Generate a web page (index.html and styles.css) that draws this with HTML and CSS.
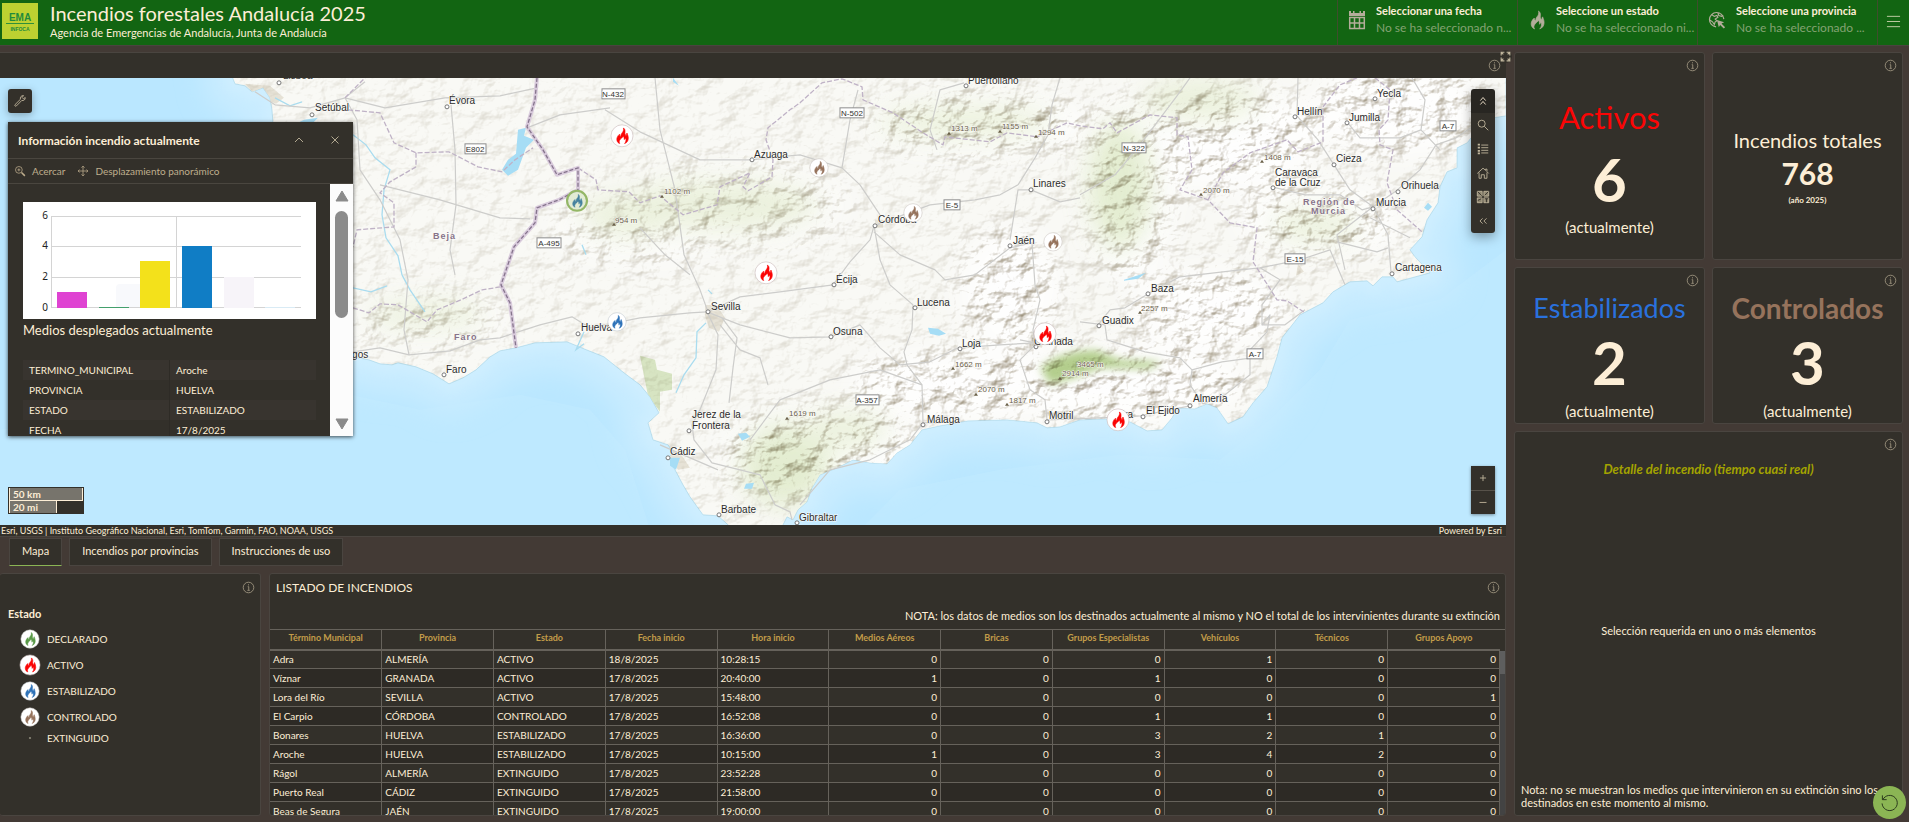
FILE: index.html
```html
<!DOCTYPE html>
<html lang="es">

<head>
    <meta charset="UTF-8">
    <meta name="viewport" content="width=device-width, initial-scale=1.0">
    <title>Incendios forestales Andalucía 2025</title>
    <link rel="stylesheet" href="styles.css">
</head>

<body>

    <!-- Shared icons -->
    <svg class="sprite" aria-hidden="true">
        <symbol id="info" viewBox="0 0 16 16">
            <circle cx="8" cy="8" r="6.5" fill="none" stroke="currentColor" />
            <path d="M8 4v1.4M7 7h1.3v4.4M6.6 11.5h3" fill="none" stroke="currentColor" />
        </symbol>
        <symbol id="flame" viewBox="0 0 16 16">
            <path d="M9.400 0c.5 2.400-.2 3.700-1.500 5.300C7 6.400 6.700 7.600 7.100 8.700 6 8.300 5.500 7.400 5.600 6.300 3.500 8 2.500 10.300 2.900 12.400 3.200 14 4.300 15.300 5.800 16c-.9-1.700-.7-3.100.5-4.500.9-1.100 2.200-1.700 2.900-3.100.9 1 1.200 2 .9 3.300.8-.3 1.200-1 1.300-1.900 1.100 2.200.6 4.500-1 6.200 2.400-1 3.800-2.900 3.900-5.400.1-2-.7-3.700-1.300-5.400-.7 1-.7 1.700-.5 2.800C11 7 10.700 5.700 11 4.300 11.300 2.400 10.700 1 9.400 0z" stroke-width=".6" />
        </symbol>
        <symbol id="fire-red" viewBox="0 0 24 24">
            <circle cx="12" cy="12" r="11" fill="#fff" stroke="#c9b9b9" stroke-width=".6" />
            <use href="#flame" x="4" y="4" width="16" height="16" fill="#fb0505" stroke="#fb0505" />
        </symbol>
        <symbol id="fire-blue" viewBox="0 0 24 24">
            <circle cx="12" cy="12" r="11" fill="#fff" stroke="#b9c0c9" stroke-width=".6" />
            <use href="#flame" x="4" y="4" width="16" height="16" fill="#2f73b9" stroke="#2f73b9" />
        </symbol>
        <symbol id="fire-brown" viewBox="0 0 24 24">
            <circle cx="12" cy="12" r="11" fill="#fff" stroke="#c4bfba" stroke-width=".6" />
            <use href="#flame" x="4" y="4" width="16" height="16" fill="#96735c" stroke="#96735c" />
        </symbol>
        <symbol id="fire-green" viewBox="0 0 24 24">
            <circle cx="12" cy="12" r="11" fill="#fff" stroke="#bcc4ba" stroke-width=".6" />
            <use href="#flame" x="4" y="4" width="16" height="16" fill="#5a9a48" stroke="#5a9a48" />
        </symbol>
    </svg>

    <header class="header">
        <svg class="logo" viewBox="0 0 36 36" role="img" aria-label="EMA INFOCA">
            <rect width="36" height="36" fill="#bdd131" />
            <text class="logo-ema" x="18" y="18">EMA</text>
            <path d="M4 20.500h28" stroke="#2f8f3a" stroke-width="1" />
            <text class="logo-infoca" x="18" y="28">INFOCA</text>
        </svg>
        <div class="titles">
            <h1>Incendios forestales Andalucía 2025</h1>
            <p>Agencia de Emergencias de Andalucía, Junta de Andalucía</p>
        </div>
        <button class="selector" type="button">
            <svg class="selector-icon" viewBox="0 0 18 20">
                <path d="M1 1h2v2h2V1h1.500v2h5V1H13v2h2V1h2v5H1z" fill="currentColor" />
                <path d="M1.700 7.500h14.600v11H1.700zM1.700 13h14.600M6.500 7.500v11M11.500 7.500v11" fill="none" stroke="currentColor" stroke-width="1.500" />
            </svg>
            <span class="selector-text"><strong>Seleccionar una fecha</strong><span>No se ha seleccionado n...</span></span>
        </button>
        <button class="selector" type="button">
            <svg class="selector-icon" fill="currentColor" stroke="currentColor"><use href="#flame" /></svg>
            <span class="selector-text"><strong>Seleccione un estado</strong><span>No se ha seleccionado ni...</span></span>
        </button>
        <button class="selector" type="button">
            <svg class="selector-icon" viewBox="0 0 20 20">
                <path d="M17.600 9A8 8 0 1 0 9 17.600M4 4l3 2 3-1 1 2-3 2 2 2-2 1-1 3-2-3-3-2M11 2l1 3 3 1 2-1" fill="none" stroke="currentColor" stroke-width="1.300" />
                <path d="M10 10l8 2.500-3 1.500 4 4-1.500 1.500-4-4-1.500 2.500z" fill="currentColor" />
            </svg>
            <span class="selector-text"><strong>Seleccione una provincia</strong><span>No se ha seleccionado ...</span></span>
        </button>
        <button class="menu" type="button" aria-label="Menú">
            <svg viewBox="0 0 16 16"><path d="M1 2.500h14M1 8h14M1 13.500h14" stroke="currentColor" /></svg>
        </button>
    </header>

    <main class="dashboard">
        <div class="left">
            <div class="upper">
                <section class="panel map-panel">
                    <div class="map-bar">
                        <button class="info" type="button" aria-label="Información"><svg><use href="#info" /></svg></button>
                    </div>
                    <button class="expand" type="button" aria-label="Expandir">
                        <svg viewBox="0 0 12 12"><path d="M2 5V2h3M7 2h3v3M10 7v3H7M5 10H2V7M2 2l2 2M10 2L8 4M10 10L8 8M2 10l2-2" fill="none" stroke="currentColor" /></svg>
                    </button>
                    <div class="map">
                        <svg class="map-canvas" viewBox="0 78 1506 447" preserveAspectRatio="xMidYMid slice">
                            <defs>
                                <path id="land" d="M233 79L235 84 245 86 252 92 263 88 270 98 272 110 273 124 276 150 290 180 300 250 310 330 353 357 369 360 380 364 392 365 398 363 416 367 433 374 449 384 463 378 476 370 490 357 500 351 516 348 535 343 567 342 584 349 604 357 624 373 640 385 650 397 659 413 648 423 653 440 668 445 673 453 669 458 675 470 683 485 690 497 703 515 718 516 728 525V530H783V525L787 517 793 520 798 510 807 502 812 488 820 475 837 468 853 460 870 463 887 464 897 453 910 445 922 430 940 426 968 421 1007 420 1037 423 1047 428 1060 427 1080 420 1107 419 1130 422 1147 431 1162 430 1172 418 1177 408 1195 409 1207 404 1217 408 1228 424 1243 417 1253 403 1267 387 1277 357 1282 338 1300 315 1323 303 1333 292 1350 282 1367 281 1373 286 1382 277 1393 277 1397 282 1430 273 1415 257 1410 250 1422 237 1427 220 1438 203 1440 187 1447 172 1457 168 1457 148 1467 143 1480 127 1493 118 1506 116V70H233z" />
                                <clipPath id="land-clip"><use href="#land" /></clipPath>
                                <filter id="soft" x="-30%" y="-30%" width="160%" height="160%"><feGaussianBlur stdDeviation="13" /></filter>
                                <filter id="edge" x="-30%" y="-30%" width="160%" height="160%"><feGaussianBlur stdDeviation="4" /></filter>
                                <filter id="relief" x="0" y="0" width="100%" height="100%" color-interpolation-filters="sRGB">
                                    <feTurbulence type="fractalNoise" baseFrequency=".045 .06" numOctaves="5" seed="11" />
                                    <feDiffuseLighting surfaceScale="6" diffuseConstant="1.25" lighting-color="#fff">
                                        <feDistantLight azimuth="225" elevation="54" />
                                    </feDiffuseLighting>
                                    <feComponentTransfer>
                                        <feFuncR type="linear" slope=".5" intercept=".5" />
                                        <feFuncG type="linear" slope=".55" intercept=".45" />
                                        <feFuncB type="linear" slope=".65" intercept=".35" />
                                    </feComponentTransfer>
                                </filter>
                                <mask id="hills">
                                    <rect y="70" width="1506" height="460" fill="#3c3c3c" />
                                    <g filter="url(#soft)" fill="#ddd">
                                        <ellipse cx="640" cy="230" rx="90" ry="35" fill="#999" />
                                        <ellipse cx="740" cy="205" rx="110" ry="40" fill="#999" />
                                        <ellipse cx="980" cy="125" rx="110" ry="28" />
                                        <ellipse cx="1130" cy="190" rx="45" ry="90" />
                                        <ellipse cx="1230" cy="140" rx="90" ry="50" />
                                        <ellipse cx="820" cy="455" rx="100" ry="45" />
                                        <ellipse cx="960" cy="385" rx="110" ry="35" />
                                        <ellipse cx="1010" cy="290" rx="50" ry="60" />
                                        <ellipse cx="1120" cy="385" rx="130" ry="38" />
                                        <ellipse cx="1210" cy="310" rx="80" ry="40" />
                                        <ellipse cx="1320" cy="220" rx="80" ry="35" />
                                        <ellipse cx="1400" cy="110" rx="90" ry="45" />
                                        <ellipse cx="430" cy="320" rx="80" ry="22" fill="#999" />
                                    </g>
                                </mask>
                            </defs>

                            <!-- Sea -->
                            <rect y="70" width="1506" height="460" fill="#bae7ff" />
                            <path d="M0 530V430L90 420 160 440 250 420 290 390 350 395 420 410 520 395 590 410 625 450 650 530zM860 530L900 490 1000 470 1120 455 1220 460 1270 420 1320 370 1350 320 1440 300 1506 250V530z" fill="#c0e9ff" opacity=".7" />
                            <use href="#land" fill="none" stroke="#c9ecff" stroke-width="60" stroke-linejoin="round" filter="url(#soft)" />
                            <use href="#land" fill="none" stroke="#ceeeff" stroke-width="16" stroke-linejoin="round" filter="url(#edge)" />

                            <!-- Land, woods and relief -->
                            <use href="#land" fill="#f7f7f2" stroke="#b4dcec" />
                            <g clip-path="url(#land-clip)">
                                <g filter="url(#soft)" fill="#e4ecd0" opacity=".7">
                                    <ellipse cx="720" cy="205" rx="100" ry="26" />
                                    <ellipse cx="630" cy="215" rx="50" ry="22" />
                                    <ellipse cx="965" cy="122" rx="90" ry="18" />
                                    <ellipse cx="1120" cy="185" rx="32" ry="65" fill="#d8e5bd" />
                                    <ellipse cx="1200" cy="100" rx="60" ry="22" />
                                    <ellipse cx="785" cy="465" rx="45" ry="42" fill="#d8e5bd" />
                                    <ellipse cx="845" cy="430" rx="45" ry="20" />
                                    <ellipse cx="1315" cy="225" rx="45" ry="18" />
                                    <ellipse cx="425" cy="315" rx="60" ry="14" />
                                </g>
                                <path d="M640 356L655 360 657 370 672 374 672 390 660 392 660 412 648 396z" fill="#d7e4c2" />
                                <path d="M1040 368L1055 358 1075 352 1095 350 1120 360 1162 362 1150 369 1100 368 1075 378 1050 385z" fill="#b3cd8c" filter="url(#edge)" />
                                <path class="urban" d="M245 84l25 2 14 12-8 6-20-8zM705 305l12 1 8 12-6 14-10-4-4-12zM1032 338l12 2-2 8-10-2zM668 448l14 8 8 12-12 2-8-12zM1298 264l6 8-8 4zM875 220l8 0 0 8-8 0z" />
                                <g mask="url(#hills)" class="shade">
                                    <rect y="70" width="1506" height="460" filter="url(#relief)" />
                                </g>
                            </g>

                            <!-- Rivers and lakes -->
                            <g class="river">
                                <path d="M706 323L697 332 696 358 684 375 676 393M353 135L366 145 375 158 390 170 384 190 382 215 386 238 398 256 402 275M402 275L410 290 425 312M353 288l18 4 16-6M708 290l4 4M584 332l-8 18 8 -6M586 255l-4-10M275 98l15 8 12-4" />
                            </g>
                            <path class="lake" d="M518 130l8-2-2 8 10 4-8 8-8 22-10 6-6-6 6-10 8-6zM928 328l10 1 8 5-7 2-9-2zM738 434l8-1 4 4-8 4zM746 484l8-1-2 6-8 0zM673 78l6 8-6-4zM1124 280l22-7-8 6-14 2zM1428 203l4 4-4 4-4-3zM292 126l12-6 14-2-6 6-18 4zM670 458l10 0-4 12-6-4z" />

                            <!-- Roads -->
                            <g class="road">
                                <path d="M255 92L275 105 310 108 345 98 365 82M345 98L357 120 360 170 380 200 400 240 408 280 404 330 409 355M345 98L385 108 445 98 500 96 537 88M409 355L380 348 353 352M409 355L450 351 480 340 500 338 540 325 572 317 590 328 640 318 690 313 707 312" />
                                <path d="M380 185L440 200 500 218 530 219M451 105L455 150 456 205 450 250 455 275M527 128L560 115 610 108M605 110L640 132 700 160 752 160M655 78L660 130 675 190 684 255 700 290 708 312M640 228L665 255 690 275" />
                                <path d="M707 312L740 297 780 292 833 285 850 262 870 240 874 226 890 220 930 205 975 200 1000 195 1018 185 1035 158 1048 135 1052 105 1060 78" />
                                <path d="M707 312L740 325 790 338 831 337 860 325 880 348 900 365 930 362 958 348 1000 345 1035 343 1020 340M874 226L880 260 890 285 913 305 912 330 904 352 907 365 922 385 923 423M707 312L718 335 716 370 700 410 692 425 694 440 712 463 760 475 775 505 790 512 792 520M720 325L740 350 760 358 768 385M722 318l15 20-4 30-4 35" />
                                <path d="M874 232L900 255 935 270 945 280 975 275 1010 248 1032 243 1035 285 1040 300 1033 330 1035 345M880 215L860 185 842 168 850 120 858 90M842 168L800 155 768 158 752 160M964 83L940 90 930 130 937 150M1031 190L1018 190 1010 240M1031 190L1060 202 1080 198M1080 195L1115 175 1140 145 1177 96 1190 78M1080 322L1105 325 1107 340 1145 352 1180 358 1192 370 1190 385 1203 404 1225 395 1250 375 1250 350 1267 332 1270 315 1262 325M1098 325L1110 310 1125 308 1150 293 1180 277 1240 270 1260 268 1300 260 1330 250 1345 285M1260 268L1280 280 1262 305 1262 325 1285 325 1305 310M1192 370l30-8 30-4" />
                                <path d="M1298 78L1297 116 1318 140 1334 165 1350 190 1373 207 1388 235 1390 260 1391 272M1272 187L1305 195 1340 195 1362 210 1373 207 1395 192 1420 170 1436 145 1456 138 1471 128M1373 207L1337 235 1345 270M1370 218l40 20M1337 242l40 10 11-4M1412 78L1425 100 1421 130 1440 150M1347 122L1360 138 1400 138 1421 130M923 423L960 422M718 470L660 445M923 423L910 440 870 460 830 470 800 505M1035 345L1020 360 1030 390 1045 400 1047 420 1100 418 1140 416 1190 406M750 440L780 400 830 380 880 370 922 385" />
                            </g>

                            <!-- Limits between provinces and countries -->
                            <g class="limit">
                                <path d="M348 110L380 113 394 143 416 153 449 152 478 167 502 172 515 160 533 148M416 153L416 167 390 182 380 193 394 203 394 227 357 230 353 247M353 308L369 313 380 304 398 305 427 322 437 310 461 300 482 290 501 287M345 98l20-20" />
                                <path d="M578 168L596 180 598 190 629 192 640 203 660 196 683 215 717 205 720 187 750 173 743 187 748 191 772 177 773 160 766 140 768 128 790 110 800 103 822 83 842 79 862 87 863 100 893 113 923 133 943 145 945 137 990 142 1007 133 1037 137 1067 123 1080 126 1103 129 1110 123 1117 133 1150 115 1177 118 1177 135 1188 137 1192 170 1180 190 1208 200 1230 223 1257 228 1253 262 1277 300 1287 301 1305 313M1208 200L1223 173 1250 153 1287 140 1298 152 1323 142 1323 107 1340 85 1357 78M1375 78L1390 90 1388 120 1379 130 1380 145 1393 150 1387 183 1397 210 1422 232" />
                            </g>
                            <path class="frontier-halo" d="M537 78L535 100 527 127 543 150 557 175 578 168 578 190 559 200 537 208 535 223 514 247 501 285 510 303 516 348" />
                            <path class="frontier" d="M537 78L535 100 527 127 543 150 557 175 578 168 578 190 559 200 537 208 535 223 514 247 501 285 510 303 516 348" />

                            <!-- Towns -->
                            <g class="town">
                                <circle cx="279" cy="83" r="2" /><circle cx="312" cy="115" r="2" /><circle cx="447" cy="107" r="2" />
                                <circle cx="444" cy="375" r="2" /><circle cx="578" cy="334" r="2" /><circle cx="752" cy="160" r="2" />
                                <circle cx="966" cy="86" r="2" /><circle cx="1031" cy="190" r="2" /><circle cx="875" cy="226" r="2" />
                                <circle cx="1010" cy="246" r="2" /><circle cx="708" cy="312" r="2" /><circle cx="834" cy="285" r="2" />
                                <circle cx="915" cy="308" r="2" /><circle cx="831" cy="337" r="2" /><circle cx="960" cy="349" r="2" />
                                <circle cx="1036" cy="347" r="2" /><circle cx="923" cy="425" r="2" /><circle cx="1047" cy="422" r="2" />
                                <circle cx="689" cy="431" r="2" /><circle cx="668" cy="458" r="2" /><circle cx="719" cy="515" r="2" />
                                <circle cx="797" cy="523" r="2" /><circle cx="1375" cy="99" r="2" /><circle cx="1295" cy="117" r="2" />
                                <circle cx="1347" cy="123" r="2" /><circle cx="1334" cy="165" r="2" /><circle cx="1273" cy="188" r="2" />
                                <circle cx="1398" cy="192" r="2" /><circle cx="1373" cy="209" r="2" /><circle cx="1392" cy="274" r="2" />
                                <circle cx="1148" cy="294" r="2" /><circle cx="1099" cy="326" r="2" /><circle cx="1190" cy="406" r="2" />
                                <circle cx="1143" cy="417" r="2" />
                            </g>
                            <g class="place">
                                <text x="283" y="79">Lisboa</text><text x="315" y="111">Setúbal</text><text x="449" y="104">Évora</text>
                                <text x="341" y="358">Lagos</text><text x="446" y="373">Faro</text><text x="581" y="331">Huelva</text>
                                <text x="754" y="158">Azuaga</text><text x="968" y="84">Puertollano</text><text x="1033" y="187">Linares</text>
                                <text x="878" y="223">Córdoba</text><text x="1013" y="244">Jaén</text><text x="711" y="310">Sevilla</text>
                                <text x="836" y="283">Écija</text><text x="917" y="306">Lucena</text><text x="833" y="335">Osuna</text>
                                <text x="962" y="347">Loja</text><text x="1034" y="345">Granada</text><text x="927" y="423">Málaga</text>
                                <text x="1049" y="419">Motril</text><text x="692" y="418">Jerez de la</text><text x="692" y="429">Frontera</text>
                                <text x="670" y="455">Cádiz</text><text x="721" y="513">Barbate</text><text x="799" y="521">Gibraltar</text>
                                <text x="1377" y="97">Yecla</text><text x="1297" y="115">Hellín</text><text x="1349" y="121">Jumilla</text>
                                <text x="1336" y="162">Cieza</text><text x="1275" y="176">Caravaca</text><text x="1275" y="186">de la Cruz</text>
                                <text x="1401" y="189">Orihuela</text><text x="1376" y="206">Murcia</text><text x="1395" y="271">Cartagena</text>
                                <text x="1151" y="292">Baza</text><text x="1102" y="324">Guadix</text><text x="1193" y="402">Almería</text>
                                <text x="1146" y="414">El Ejido</text><text x="1112" y="418">Adra</text>
                            </g>
                            <g class="region">
                                <text x="310" y="150">Setúbal</text><text x="433" y="239">Beja</text><text x="454" y="340">Faro</text>
                                <text x="1303" y="205">Región de</text><text x="1311" y="214">Murcia</text>
                            </g>
                            <g class="peak">
                                <text x="615" y="223">954 m</text><text x="664" y="194">1102 m</text><text x="951" y="131">1313 m</text>
                                <text x="1002" y="129">1155 m</text><text x="1038" y="135">1294 m</text><text x="1264" y="160">1408 m</text>
                                <text x="1203" y="193">2070 m</text><text x="1141" y="311">2257 m</text><text x="1077" y="367">3465 m</text>
                                <text x="1062" y="376">2914 m</text><text x="955" y="367">1662 m</text><text x="978" y="392">2070 m</text>
                                <text x="1009" y="403">1817 m</text><text x="789" y="416">1619 m</text>
                                <path d="M612 226l2-3 2 3zM660 198l2-3 2 3zM947 135l2-3 2 3zM998 133l2-3 2 3zM1034 138l2-3 2 3zM1260 163l2-3 2 3zM1199 196l2-3 2 3zM1138 314l2-3 2 3zM1058 380l2-3 2 3zM951 370l2-3 2 3zM974 396l2-3 2 3zM1005 406l2-3 2 3zM785 420l2-3 2 3z" />
                            </g>
                            <g class="shield">
                                <rect x="602" y="89" width="23" height="10" /><text x="613" y="97">N-432</text>
                                <rect x="465" y="144" width="21" height="10" /><text x="475" y="152">E802</text>
                                <rect x="537" y="238" width="24" height="10" /><text x="549" y="246">A-495</text>
                                <rect x="840" y="108" width="24" height="10" /><text x="852" y="116">N-502</text>
                                <rect x="944" y="200" width="16" height="10" /><text x="952" y="208">E-5</text>
                                <rect x="856" y="395" width="23" height="10" /><text x="867" y="403">A-357</text>
                                <rect x="1122" y="143" width="24" height="10" /><text x="1134" y="151">N-322</text>
                                <rect x="1285" y="254" width="20" height="10" /><text x="1295" y="262">E-15</text>
                                <rect x="1247" y="349" width="16" height="10" /><text x="1255" y="357">A-7</text>
                                <rect x="1440" y="121" width="16" height="10" /><text x="1448" y="129">A-7</text>
                            </g>

                            <!-- Fires -->
                            <use href="#fire-red" x="610" y="124" width="24" height="24" />
                            <use href="#fire-blue" x="567" y="191" width="20" height="20" />
                            <circle cx="577" cy="201" r="10" fill="#8bb554" fill-opacity=".25" stroke="#94b766" stroke-width="2" />
                            <use href="#fire-blue" x="607" y="312" width="20" height="20" />
                            <use href="#fire-brown" x="809" y="158" width="20" height="20" />
                            <use href="#fire-brown" x="903" y="203" width="20" height="20" />
                            <use href="#fire-brown" x="1043" y="232" width="20" height="20" />
                            <use href="#fire-red" x="754" y="261" width="24" height="24" />
                            <use href="#fire-red" x="1033" y="322" width="24" height="24" />
                            <use href="#fire-red" x="1106" y="408" width="24" height="24" />
                        </svg>

                        <button class="tool wrench" type="button" aria-label="Herramientas">
                            <svg viewBox="0 0 16 16"><path d="M2.300 12.200l6.200-6.200c-.6-2.200.8-4.300 3.500-4.200l-1.600 2.200 1.500 1.500L14 4c.2 2.500-1.800 4-4 3.400l-6.200 6.300c-1 .9-2.400-.5-1.500-1.500z" fill="none" stroke="currentColor" /></svg>
                        </button>

                        <article class="popup">
                            <header class="popup-header">
                                <h2>Información incendio actualmente</h2>
                                <button type="button" aria-label="Contraer"><svg viewBox="0 0 16 16"><path d="M4 10l4-4 4 4" fill="none" stroke="currentColor" /></svg></button>
                                <button type="button" aria-label="Cerrar"><svg viewBox="0 0 16 16"><path d="M4.500 4.500l7 7M11.500 4.500l-7 7" stroke="currentColor" /></svg></button>
                            </header>
                            <div class="popup-actions">
                                <button type="button"><svg viewBox="0 0 16 16"><circle cx="6.500" cy="6.500" r="4.500" fill="none" stroke="currentColor" /><path d="M4.500 6.500h4M6.500 4.500v4" stroke="currentColor" /><path d="M10 10l4.500 4.500" stroke="currentColor" stroke-width="2" /></svg>Acercar</button>
                                <button type="button"><svg viewBox="0 0 16 16"><path d="M8 1.500v13M1.500 8h13M6 3.500l2-2 2 2M6 12.500l2 2 2-2M3.500 6l-2 2 2 2M12.500 6l2 2-2 2" fill="none" stroke="currentColor" /></svg>Desplazamiento panorámico</button>
                            </div>
                            <div class="popup-body">
                                <div class="popup-content">
                                    <svg class="chart" viewBox="0 0 293 117" role="img" aria-label="Medios desplegados">
                                        <path d="M28.500 14v91M153.500 14v91M28 14.500h250M28 44.500h250M28 75.500h250M28 105.500h250" stroke="#d4d4d4" />
                                        <path d="M93 105V86q0-4 4-4h45v23z" fill="#f8f9fc" />
                                        <rect x="34" y="90" width="30" height="16" fill="#df43d2" />
                                        <rect x="76" y="105" width="30" height="1" fill="#43a06c" />
                                        <rect x="117" y="59" width="30" height="47" fill="#f3e11b" />
                                        <rect x="159" y="44" width="30" height="62" fill="#107dc5" />
                                        <rect x="201" y="75" width="30" height="31" fill="#f7f4f9" />
                                        <rect x="242" y="105" width="30" height="1" fill="#d9ebf5" />
                                        <text x="25" y="17">6</text><text x="25" y="47">4</text><text x="25" y="78">2</text><text x="25" y="109">0</text>
                                    </svg>
                                    <p class="chart-caption">Medios desplegados actualmente</p>
                                    <table class="attributes">
                                        <tr><th scope="row">TERMINO_MUNICIPAL</th><td>Aroche</td></tr>
                                        <tr><th scope="row">PROVINCIA</th><td>HUELVA</td></tr>
                                        <tr><th scope="row">ESTADO</th><td>ESTABILIZADO</td></tr>
                                        <tr><th scope="row">FECHA</th><td>17/8/2025</td></tr>
                                    </table>
                                </div>
                                <div class="scrollbar">
                                    <svg viewBox="0 0 14 12"><path d="M7 1l6 10H1z" fill="currentColor" stroke="currentColor" stroke-linejoin="round" /></svg>
                                    <span class="thumb"></span>
                                    <svg viewBox="0 0 14 12"><path d="M7 11L1 1h12z" fill="currentColor" stroke="currentColor" stroke-linejoin="round" /></svg>
                                </div>
                            </div>
                        </article>

                        <div class="toolbar">
                            <button class="tool active" type="button" aria-label="Contraer"><svg viewBox="0 0 16 16"><path d="M5 7.500l3-3.500 3 3.500M5 12l3-3.500 3 3.500" fill="none" stroke="currentColor" /></svg></button>
                            <button class="tool" type="button" aria-label="Buscar"><svg viewBox="0 0 16 16"><circle cx="6.500" cy="6.500" r="4" fill="none" stroke="currentColor" /><path d="M9.500 9.500l4.500 4.500" stroke="currentColor" /></svg></button>
                            <button class="tool" type="button" aria-label="Leyenda"><svg viewBox="0 0 16 16"><path d="M6 3.500h8M6 6.500h8M6 9.500h8M6 12.500h8" stroke="currentColor" /><path d="M2 3h2.500M2 6.500h2.500M2 10h2.500M2 13h2.500" stroke="currentColor" stroke-width="2" /></svg></button>
                            <button class="tool" type="button" aria-label="Inicio"><svg viewBox="0 0 16 16"><path d="M1.500 8.500L8 2.500l3 2.500V3.500h1.500v3l2 2M3.500 7.500v6.500H6v-4h3.500v4h3V7.500" fill="none" stroke="currentColor" /></svg></button>
                            <button class="tool" type="button" aria-label="Mapa base"><svg viewBox="0 0 16 16"><path d="M1.500 1.500h5.500v5.500H1.500zM9 1.500h5.500v5.500H9zM1.500 9h5.500v5.500H1.500zM9 9h5.500v5.500H9z" fill="#8e8671" stroke="currentColor" /><path d="M2 2l4.500 4.500M10 6l4-4M2 12l4-2M10 10h4M12 10v4" stroke="#33302a" /></svg></button>
                            <button class="tool" type="button" aria-label="Plegar"><svg viewBox="0 0 16 16"><path d="M7.500 5l-3 3 3 3M12 5L9 8l3 3" fill="none" stroke="currentColor" /></svg></button>
                        </div>

                        <div class="zoom">
                            <button class="tool" type="button" aria-label="Acercar"><svg viewBox="0 0 16 16"><path d="M8 4.500v7M4.500 8h7" stroke="currentColor" /></svg></button>
                            <button class="tool" type="button" aria-label="Alejar"><svg viewBox="0 0 16 16"><path d="M4 8.500h8" stroke="currentColor" /></svg></button>
                        </div>

                        <div class="scale">
                            <span class="km">50 km</span>
                            <span class="mi">20 mi</span>
                        </div>
                    </div>
                    <footer class="attribution">
                        <span>Esri, USGS | Instituto Geográfico Nacional, Esri, TomTom, Garmin, FAO, NOAA, USGS</span>
                        <span>Powered by <a href="#">Esri</a></span>
                    </footer>
                </section>
                <nav class="tabs">
                    <button class="tab selected" type="button">Mapa</button>
                    <button class="tab" type="button">Incendios por provincias</button>
                    <button class="tab" type="button">Instrucciones de uso</button>
                </nav>
            </div>

            <div class="lower">
                <section class="panel legend">
                    <button class="info" type="button" aria-label="Información"><svg><use href="#info" /></svg></button>
                    <h2>Estado</h2>
                    <ul>
                        <li><svg><use href="#fire-green" /></svg>DECLARADO</li>
                        <li class="big"><svg><use href="#fire-red" /></svg>ACTIVO</li>
                        <li><svg><use href="#fire-blue" /></svg>ESTABILIZADO</li>
                        <li><svg><use href="#fire-brown" /></svg>CONTROLADO</li>
                        <li class="dot"><svg viewBox="0 0 18 18"><circle cx="9" cy="9" r="1" fill="#8b8779" /></svg>EXTINGUIDO</li>
                    </ul>
                </section>

                <section class="panel listing">
                    <button class="info" type="button" aria-label="Información"><svg><use href="#info" /></svg></button>
                    <h2>LISTADO DE INCENDIOS</h2>
                    <p>NOTA: los datos de medios son los destinados actualmente al mismo y NO el total de los intervinientes durante su extinción</p>
                    <div class="table-wrap">
                        <table class="fires">
                            <thead>
                                <tr><th>Término Municipal</th><th>Provincia</th><th>Estado</th><th>Fecha inicio</th><th>Hora inicio</th><th>Medios Aéreos</th><th>Bricas</th><th>Grupos Especialistas</th><th>Vehículos</th><th>Técnicos</th><th>Grupos Apoyo</th></tr>
                            </thead>
                            <tbody>
                                <tr><td>Adra</td><td>ALMERÍA</td><td>ACTIVO</td><td>18/8/2025</td><td>10:28:15</td><td>0</td><td>0</td><td>0</td><td>1</td><td>0</td><td>0</td></tr>
                                <tr><td>Víznar</td><td>GRANADA</td><td>ACTIVO</td><td>17/8/2025</td><td>20:40:00</td><td>1</td><td>0</td><td>1</td><td>0</td><td>0</td><td>0</td></tr>
                                <tr><td>Lora del Río</td><td>SEVILLA</td><td>ACTIVO</td><td>17/8/2025</td><td>15:48:00</td><td>0</td><td>0</td><td>0</td><td>0</td><td>0</td><td>1</td></tr>
                                <tr><td>El Carpio</td><td>CÓRDOBA</td><td>CONTROLADO</td><td>17/8/2025</td><td>16:52:08</td><td>0</td><td>0</td><td>1</td><td>1</td><td>0</td><td>0</td></tr>
                                <tr><td>Bonares</td><td>HUELVA</td><td>ESTABILIZADO</td><td>17/8/2025</td><td>16:36:00</td><td>0</td><td>0</td><td>3</td><td>2</td><td>1</td><td>0</td></tr>
                                <tr><td>Aroche</td><td>HUELVA</td><td>ESTABILIZADO</td><td>17/8/2025</td><td>10:15:00</td><td>1</td><td>0</td><td>3</td><td>4</td><td>2</td><td>0</td></tr>
                                <tr><td>Rágol</td><td>ALMERÍA</td><td>EXTINGUIDO</td><td>17/8/2025</td><td>23:52:28</td><td>0</td><td>0</td><td>0</td><td>0</td><td>0</td><td>0</td></tr>
                                <tr><td>Puerto Real</td><td>CÁDIZ</td><td>EXTINGUIDO</td><td>17/8/2025</td><td>21:58:00</td><td>0</td><td>0</td><td>0</td><td>0</td><td>0</td><td>0</td></tr>
                                <tr><td>Beas de Segura</td><td>JAÉN</td><td>EXTINGUIDO</td><td>17/8/2025</td><td>19:00:00</td><td>0</td><td>0</td><td>0</td><td>0</td><td>0</td><td>0</td></tr>
                            </tbody>
                        </table>
                        <span class="table-scroll"></span>
                    </div>
                </section>
            </div>
        </div>

        <aside class="right">
            <section class="panel card main">
                <button class="info" type="button" aria-label="Información"><svg><use href="#info" /></svg></button>
                <h2 class="active-title">Activos</h2>
                <strong class="number">6</strong>
                <p>(actualmente)</p>
            </section>
            <section class="panel card total">
                <button class="info" type="button" aria-label="Información"><svg><use href="#info" /></svg></button>
                <h2>Incendios totales</h2>
                <strong class="number">768</strong>
                <p>(año 2025)</p>
            </section>
            <section class="panel card compact">
                <button class="info" type="button" aria-label="Información"><svg><use href="#info" /></svg></button>
                <h2 class="stable-title">Estabilizados</h2>
                <strong class="number">2</strong>
                <p>(actualmente)</p>
            </section>
            <section class="panel card compact">
                <button class="info" type="button" aria-label="Información"><svg><use href="#info" /></svg></button>
                <h2 class="controlled-title">Controlados</h2>
                <strong class="number">3</strong>
                <p>(actualmente)</p>
            </section>
            <section class="panel detail">
                <button class="info" type="button" aria-label="Información"><svg><use href="#info" /></svg></button>
                <h2>Detalle del incendio (tiempo cuasi real)</h2>
                <p class="empty">Selección requerida en uno o más elementos</p>
                <p class="note">Nota: no se muestran los medios que intervinieron en su extinción sino los destinados en este momento al mismo.</p>
            </section>
        </aside>
    </main>

    <button class="reset" type="button" aria-label="Restablecer">
        <svg viewBox="0 0 20 20"><path d="M2.500 2.500v4.500H7M3 7a8 8 0 1 1-.8 4" fill="none" stroke="currentColor" /></svg>
    </button>

</body>

</html>
```
FILE: styles.css
```css
* {
    box-sizing: border-box;
}

body {
    margin: 0;
    height: 100vh;
    display: flex;
    flex-direction: column;
    overflow: hidden;
    background: #433a35;
    color: #fdeed6;
    font-family: Lato, "Open Sans", sans-serif;
    font-size: 12px;
}

h1,
h2,
p,
ul {
    margin: 0;
    padding: 0;
    font-weight: normal;
}

button {
    padding: 0;
    border: none;
    background: none;
    color: inherit;
    font: inherit;
    cursor: pointer;
}

svg {
    display: block;
}

.sprite {
    position: absolute;
    width: 0;
    height: 0;
}

/* Header */

.header {
    display: flex;
    flex: none;
    height: 46px;
    background: #126512;
    border-bottom: 1px solid #4a443f;
}

.logo {
    width: 36px;
    height: 36px;
    margin: 3px 12px 0 2px;
}

.logo text {
    fill: #1f8a3c;
    font-family: "Liberation Sans", sans-serif;
    font-weight: bold;
    text-anchor: middle;
}

.logo .logo-ema {
    font-size: 10px;
}

.logo .logo-infoca {
    font-size: 5px;
}

.titles {
    flex: 1;
}

.titles h1 {
    font-size: 20px;
    line-height: 26px;
}

.titles p {
    font-size: 11px;
    line-height: 14px;
}

.selector {
    display: flex;
    gap: 10px;
    width: 180px;
    padding: 2px 10px 0;
    border-left: 1px solid #3f4e2c;
    text-align: left;
}

.selector-icon {
    flex: none;
    width: 18px;
    height: 20px;
    margin-top: 8px;
    color: #b3ad9a;
}

.selector-text {
    white-space: nowrap;
}

.selector-text strong {
    display: block;
    font-size: 11px;
    line-height: 18px;
}

.selector-text span {
    font-size: 12px;
    line-height: 14px;
    color: #84a373;
}

.menu {
    width: 32px;
    padding: 0 8px 3px;
    border-left: 1px solid #3f4e2c;
    color: #c5cfa9;
}

/* Layout */

.dashboard {
    flex: 1;
    min-height: 0;
    display: grid;
    grid-template-columns: minmax(0, 1fr) 389px;
    gap: 8px;
    padding: 6px 6px 6px 0;
}

.left {
    display: flex;
    flex-direction: column;
    gap: 7px;
    min-height: 0;
}

.panel {
    position: relative;
    background: #33302a;
    border: 1px solid #4a4540;
    border-radius: 3px;
}

.info {
    position: absolute;
    top: 6px;
    right: 5px;
    color: #a69c86;
}

.info svg {
    width: 13px;
    height: 13px;
}

.upper {
    flex: 19 1 0;
    min-height: 0;
    display: flex;
    flex-direction: column;
}

.lower {
    flex: 9 1 0;
    min-height: 0;
    display: grid;
    grid-template-columns: 261px minmax(0, 1fr);
    gap: 8px;
}

/* Map */

.map-panel {
    flex: 1;
    min-height: 0;
    display: flex;
    flex-direction: column;
    border-left: none;
    border-right: none;
    border-radius: 0;
}

.map-bar {
    height: 25px;
}

.expand {
    position: absolute;
    top: -3px;
    right: -6px;
    width: 13px;
    height: 13px;
    border-radius: 50%;
    background: #33302a;
    color: #c2b79e;
}

.map {
    position: relative;
    flex: 1;
    min-height: 0;
    overflow: hidden;
    background: #bae7ff;
}

.map-canvas {
    width: 100%;
    height: 100%;
    font-family: "Liberation Sans", Arial, sans-serif;
}

.shade {
    mix-blend-mode: multiply;
}

.urban {
    fill: #e6e2d6;
}

.river {
    fill: none;
    stroke: #a9dcef;
    stroke-width: 1.3;
}

.lake {
    fill: #a6ddf5;
}

.road {
    fill: none;
    stroke: #cdcdcb;
    stroke-width: 1.2;
    stroke-linejoin: round;
}

.limit {
    fill: none;
    stroke: #bfb2c6;
    stroke-width: 1.3;
    stroke-dasharray: 5 2;
}

.frontier-halo {
    fill: none;
    stroke: #d9cbdc;
    stroke-width: 4;
    stroke-linejoin: round;
}

.frontier {
    fill: none;
    stroke: #85748c;
    stroke-width: 1.3;
    stroke-dasharray: 4 2;
}

.town {
    fill: #fff;
    stroke: #777;
}

.map-canvas text {
    paint-order: stroke;
    stroke: #fbfbf8;
    stroke-width: 1px;
}

.place {
    font-size: 10px;
    fill: #2b2b2b;
}

.region {
    font-size: 9px;
    font-weight: bold;
    fill: #877389;
    letter-spacing: 1px;
}

.peak {
    font-size: 8px;
    fill: #6b614a;
}

.shield {
    font-size: 8px;
    text-anchor: middle;
    fill: #333;
}

.shield rect {
    fill: #fff;
    stroke: #8d8d8d;
}

.tool {
    display: flex;
    align-items: center;
    justify-content: center;
    width: 24px;
    height: 24px;
    background: #33302a;
    color: #c2b79e;
}

.tool svg {
    width: 14px;
    height: 14px;
}

.tool.active {
    background: #282622;
    color: #fdeed6;
}

.wrench {
    position: absolute;
    top: 11px;
    left: 8px;
    border-radius: 3px;
    box-shadow: 0 2px 8px rgba(0, 0, 0, 0.3);
}

.toolbar {
    position: absolute;
    top: 11px;
    right: 11px;
    border-radius: 3px;
    overflow: hidden;
    box-shadow: 0 4px 12px rgba(0, 0, 0, 0.35);
}

.zoom {
    position: absolute;
    right: 11px;
    bottom: 11px;
    box-shadow: 0 1px 3px rgba(0, 0, 0, 0.4);
}

.zoom .tool + .tool {
    border-top: 1px solid #57524a;
}

.scale {
    position: absolute;
    left: 8px;
    bottom: 11px;
    width: 76px;
    background: #33302a;
    border: 1px solid #33302a;
    font-size: 10px;
    font-weight: bold;
    line-height: 12px;
}

.scale span {
    display: block;
    padding-left: 3px;
    background: #77746c;
    border: 1px solid #fdeed6;
}

.scale .km {
    border-top: none;
}

.scale .mi {
    width: 48px;
    border-top: none;
    border-bottom: none;
}

.attribution {
    display: flex;
    justify-content: space-between;
    padding: 0 4px 0 1px;
    font-size: 9px;
    line-height: 11px;
}

.attribution a {
    color: inherit;
    text-decoration: none;
}

/* Popup */

.popup {
    position: absolute;
    top: 44px;
    left: 8px;
    width: 345px;
    background: #33302a;
    box-shadow: 0 1px 4px rgba(0, 0, 0, 0.7);
}

.popup-header {
    display: flex;
    align-items: center;
    gap: 20px;
    height: 36px;
    padding: 0 10px;
}

.popup-header h2 {
    flex: 1;
    font-size: 12px;
    font-weight: bold;
}

.popup-header svg {
    width: 16px;
    height: 16px;
    color: #b3a991;
}

.popup-actions {
    display: flex;
    align-items: center;
    gap: 12px;
    height: 26px;
    padding: 0 6px;
    border-top: 1px solid #4a463f;
    border-bottom: 1px solid #4a463f;
    color: #bfae8d;
    font-size: 10px;
}

.popup-actions button {
    display: flex;
    align-items: center;
    gap: 6px;
}

.popup-actions svg {
    width: 12px;
    height: 12px;
}

.popup-body {
    display: flex;
    height: 252px;
    overflow: hidden;
}

.popup-content {
    flex: 1;
    padding: 18px 14px 0 15px;
}

.chart {
    width: 100%;
    background: #fff;
}

.chart text {
    stroke: none;
    fill: #222;
    font-family: "Noto Sans", sans-serif;
    font-size: 10px;
    text-anchor: end;
}

.chart-caption {
    margin: 2px 0 21px;
    font-size: 13px;
    line-height: 18px;
}

.attributes {
    width: 100%;
    border-collapse: collapse;
    table-layout: fixed;
    font-size: 10px;
}

.attributes tr:nth-child(odd) {
    background: #38342f;
}

.attributes th,
.attributes td {
    height: 20px;
    padding: 0 6px;
    font-weight: normal;
    text-align: left;
}

.attributes td {
    border-left: 1px solid #2e2b26;
}

.scrollbar {
    display: flex;
    flex-direction: column;
    align-items: center;
    width: 23px;
    padding: 6px 0;
    background: #fcfcfc;
    color: #8b8b8b;
}

.scrollbar svg {
    width: 14px;
    height: 12px;
}

.thumb {
    width: 13px;
    height: 107px;
    margin: 9px 0 auto;
    border-radius: 7px;
    background: #8b8b8b;
}

/* Tabs */

.tabs {
    display: flex;
    gap: 7px;
    padding: 1px 0 0 9px;
}

.tab {
    height: 28px;
    padding: 0 12px 3px;
    background: #33302a;
    border: 1px solid #4a4540;
    font-size: 11px;
}

.tab.selected {
    border-bottom-color: #8bb554;
}

/* Legend */

.legend {
    padding: 30px 8px;
    border-left: none;
    font-size: 10px;
}

.legend h2 {
    font-size: 11px;
    font-weight: bold;
    line-height: 20px;
}

.legend ul {
    list-style: none;
    padding: 2px 0 0 12px;
}

.legend li {
    display: flex;
    align-items: center;
    gap: 7px;
    height: 26px;
}

.legend li svg {
    width: 20px;
    height: 20px;
    flex: none;
}

.legend .big svg {
    width: 22px;
    height: 22px;
    margin: 0 -1px;
}

.legend .dot {
    height: 16px;
}

/* List of fires */

.listing {
    display: flex;
    flex-direction: column;
    overflow: hidden;
    min-height: 0;
}

.listing .info,
.legend .info {
    top: 7px;
}

.listing h2 {
    padding: 4px 6px;
    font-size: 12px;
    line-height: 20px;
}

.listing p {
    padding-right: 5px;
    font-size: 11px;
    line-height: 27px;
    text-align: right;
}

.table-wrap {
    position: relative;
    flex: 1;
    min-height: 0;
    overflow: hidden;
    padding-right: 5px;
    border-top: 1px solid #66625b;
}

.fires {
    width: 100%;
    border-collapse: collapse;
    table-layout: fixed;
    font-size: 10px;
}

.fires th,
.fires td {
    height: 19px;
    padding: 0 3px 1px;
    border: 1px solid #66625b;
}

.fires th {
    height: 20px;
    padding-bottom: 3px;
    border-top: none;
    border-bottom-width: 2px;
    color: #c29c49;
    font-size: 9px;
}

.fires th:first-child,
.fires td:first-child {
    border-left: none;
}

.fires th:last-child {
    border-right: none;
}

.fires tr:nth-child(even) {
    background: #2d2a25;
}

.fires td:nth-child(n+6) {
    text-align: right;
}

.table-scroll {
    position: absolute;
    top: 21px;
    right: 0;
    bottom: 0;
    width: 5px;
    background: linear-gradient(#5e5e5e 23px, #434343 23px);
}

/* Indicators */

.right {
    display: grid;
    grid-template-columns: 1fr 1fr;
    grid-template-rows: 40fr 30fr 74fr;
    gap: 7px;
    min-height: 0;
}

.card {
    display: flex;
    flex-direction: column;
    align-items: center;
    justify-content: center;
    min-height: 0;
}

.card h2 {
    font-size: 28px;
    line-height: 34px;
}

.card .number {
    font-size: 60px;
    line-height: 66px;
    padding: 4px 0 7px;
}

.card p {
    font-size: 15px;
    line-height: 18px;
}

.main {
    padding-top: 24px;
}

.card .active-title {
    color: #fb0505;
    font-size: 31px;
}

.main .number {
    padding: 12px 0 6px;
}

.card .stable-title {
    color: #2a71dd;
    font-size: 27px;
}

.card .controlled-title {
    color: #96735c;
    font-weight: bold;
}

.compact {
    justify-content: flex-end;
    padding-bottom: 3px;
}

.total {
    padding-top: 24px;
}

.total h2 {
    font-size: 20px;
    line-height: 26px;
}

.total .number {
    font-size: 30px;
    line-height: 36px;
    padding: 2px 0 0;
}

.total p {
    font-size: 8px;
    font-weight: bold;
}

.detail {
    grid-column: span 2;
    display: flex;
    flex-direction: column;
    align-items: center;
    padding: 27px 6px 6px;
}

.detail h2 {
    color: #a3a300;
    font-size: 13px;
    font-style: italic;
    font-weight: bold;
    line-height: 20px;
}

.detail .empty {
    margin: auto;
    font-size: 11px;
}

.detail .note {
    align-self: stretch;
    font-size: 11px;
    line-height: 13px;
}

.reset {
    position: absolute;
    right: 3px;
    bottom: 3px;
    width: 33px;
    height: 33px;
    padding: 7px;
    border-radius: 50%;
    background: #8bb554;
    color: #26331a;
}
```
